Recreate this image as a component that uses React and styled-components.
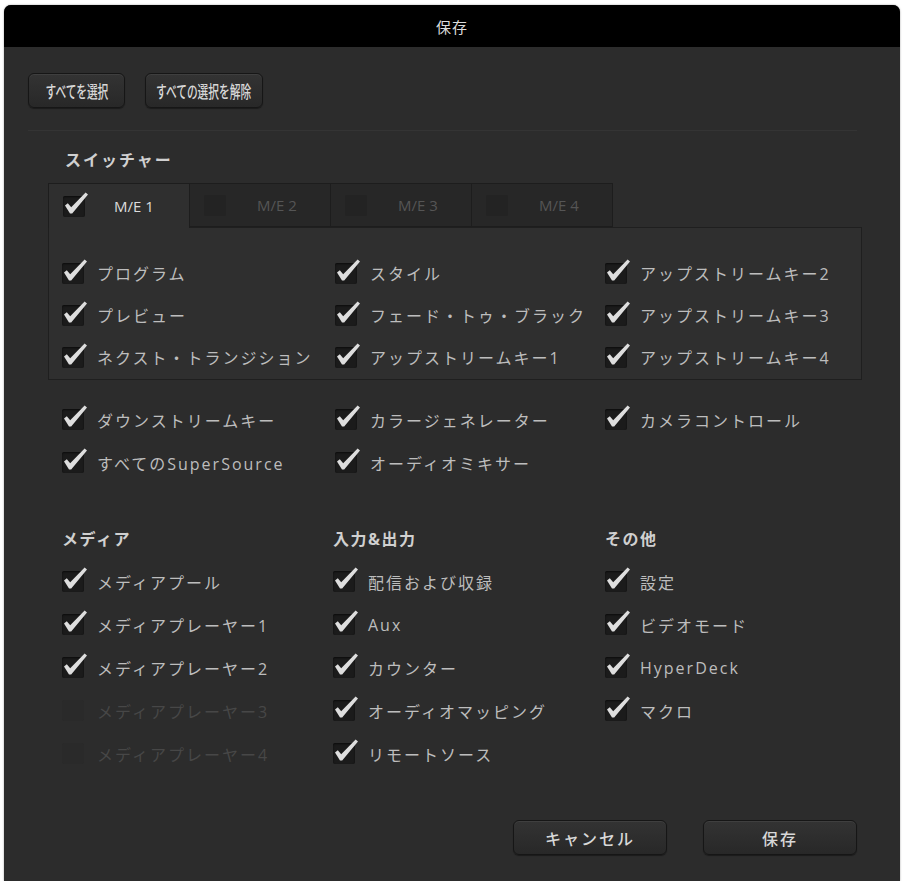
import React from "react";
import styled, { createGlobalStyle } from "styled-components";

const GlobalStyle = createGlobalStyle`
  html, body {
    margin: 0;
    padding: 0;
    background: #ffffff;
  }
  body {
    font-family: "Open Sans", "Noto Sans CJK JP", sans-serif;
  }
`;

const switcherRows = [
  ["プログラム", "スタイル", "アップストリームキー2"],
  ["プレビュー", "フェード・トゥ・ブラック", "アップストリームキー3"],
  ["ネクスト・トランジション", "アップストリームキー1", "アップストリームキー4"],
];

const switcherExtra = [
  "ダウンストリームキー",
  "カラージェネレーター",
  "カメラコントロール",
  "すべてのSuperSource",
  "オーディオミキサー",
];

const groups = [
  {
    title: "メディア",
    items: [
      { label: "メディアプール", on: true },
      { label: "メディアプレーヤー1", on: true },
      { label: "メディアプレーヤー2", on: true },
      { label: "メディアプレーヤー3", on: false },
      { label: "メディアプレーヤー4", on: false },
    ],
  },
  {
    title: "入力&出力",
    items: [
      { label: "配信および収録", on: true },
      { label: "Aux", on: true },
      { label: "カウンター", on: true },
      { label: "オーディオマッピング", on: true },
      { label: "リモートソース", on: true },
    ],
  },
  {
    title: "その他",
    items: [
      { label: "設定", on: true },
      { label: "ビデオモード", on: true },
      { label: "HyperDeck", on: true },
      { label: "マクロ", on: true },
    ],
  },
];

const tabs = ["M/E 1", "M/E 2", "M/E 3", "M/E 4"];

function Tick() {
  return (
    <TickSvg viewBox="0 0 27 27" width="27" height="27">
      <path
        d="M2 14.6 L4.8 12.2 L8.2 16.2 L22.6 1.6 L25 3.6 L9.2 22.4 L7 22.4 Z"
        fill="#dedede"
      />
    </TickSvg>
  );
}

function Check({ label, on = true, rowHeight = 42 }) {
  return (
    <CheckRow $h={rowHeight}>
      <Box $off={!on}>{on && <Tick />}</Box>
      <CheckLabel $off={!on}>{label}</CheckLabel>
    </CheckRow>
  );
}

export default function App() {
  return (
    <>
      <GlobalStyle />
      <Page>
        <Dialog>
          <TitleBar>保存</TitleBar>
          <Body>
            <TopActions>
              <ActionButton $w={97}>
                <Squeeze>すべてを選択</Squeeze>
              </ActionButton>
              <ActionButton $w={118}>
                <Squeeze>すべての選択を解除</Squeeze>
              </ActionButton>
            </TopActions>
            <Divider />

            <SectionTitle>スイッチャー</SectionTitle>
            <Switcher>
              <TabRow>
                {tabs.map((t, i) => (
                  <Tab key={t} $active={i === 0}>
                    <Box $off={i !== 0} $dim={i !== 0}>
                      {i === 0 && <Tick />}
                    </Box>
                    <TabLabel $active={i === 0}>{t}</TabLabel>
                  </Tab>
                ))}
              </TabRow>
              <Panel>
                {switcherRows.flat().map((label) => (
                  <Check key={label} label={label} />
                ))}
              </Panel>
              <ExtraGrid>
                {switcherExtra.map((label) => (
                  <Check key={label} label={label} rowHeight={43} />
                ))}
              </ExtraGrid>
            </Switcher>

            <Groups>
              {groups.map((g) => (
                <Group key={g.title}>
                  <GroupTitle>{g.title}</GroupTitle>
                  <GroupList>
                    {g.items.map((it) => (
                      <Check key={it.label} label={it.label} on={it.on} rowHeight={43} />
                    ))}
                  </GroupList>
                </Group>
              ))}
            </Groups>

            <Footer>
              <FooterButton>キャンセル</FooterButton>
              <FooterButton>保存</FooterButton>
            </Footer>
          </Body>
        </Dialog>
      </Page>
    </>
  );
}

const Page = styled.div`
  box-sizing: border-box;
  width: 903px;
  height: 881px;
  padding: 5px 3px 0 4px;
  overflow: hidden;
  background: #ffffff;
`;

const Dialog = styled.div`
  height: 876px;
  display: flex;
  flex-direction: column;
  background: #2c2c2c;
  border-radius: 7px 7px 0 0;
  overflow: hidden;
  box-shadow: 0 0 2px rgba(0, 0, 0, 0.4);
`;

const TitleBar = styled.div`
  height: 42px;
  flex: none;
  display: flex;
  align-items: center;
  justify-content: center;
  background: #000000;
  color: #dcdcdc;
  font-size: 15px;
  letter-spacing: 1px;
`;

const Body = styled.div`
  flex: 1;
  display: flex;
  flex-direction: column;
  padding: 26px 38px 0 24px;
`;

const TopActions = styled.div`
  display: flex;
  gap: 20px;
`;

const ActionButton = styled.button`
  width: ${(p) => p.$w}px;
  height: 35px;
  padding: 0;
  display: flex;
  align-items: center;
  justify-content: center;
  background: linear-gradient(#333333, #282828);
  border: 1px solid #161616;
  border-radius: 6px;
  box-shadow: inset 0 1px 0 rgba(255, 255, 255, 0.06), 0 1px 1px rgba(0, 0, 0, 0.4);
  color: #d8d8d8;
  font-family: "Noto Sans CJK JP", sans-serif;
  font-size: 17px;
  font-weight: 500;
  white-space: nowrap;
`;

const Squeeze = styled.span`
  display: inline-block;
  transform: scaleX(0.63);
`;

const Divider = styled.div`
  height: 1px;
  margin: 22px 5px 0 0;
  background: #343434;
`;

const SectionTitle = styled.div`
  margin: 19px 0 0 37px;
  line-height: 20px;
  font-size: 16px;
  font-weight: 700;
  letter-spacing: 2px;
  color: #d0d0d0;
`;

const Switcher = styled.div`
  margin: 13px 0 0 20px;
  display: flex;
  flex-direction: column;
`;

const TabRow = styled.div`
  display: flex;
  height: 44px;
`;

const Tab = styled.div`
  box-sizing: border-box;
  width: 142px;
  height: ${(p) => (p.$active ? "45px" : "44px")};
  display: flex;
  align-items: center;
  padding-left: 14px;
  position: relative;
  z-index: ${(p) => (p.$active ? 1 : 0)};
  background: ${(p) => (p.$active ? "#2f2f2f" : "#272727")};
  border: 1px solid #1d1d1d;
  border-bottom: ${(p) => (p.$active ? "none" : "1px solid #1d1d1d")};
  margin-right: -1px;
`;

const TabLabel = styled.span`
  margin-left: ${(p) => (p.$active ? "29px" : "31px")};
  font-size: 15px;
  font-weight: 500;
  color: ${(p) => (p.$active ? "#dcdcdc" : "#555555")};
`;

const Panel = styled.div`
  display: grid;
  grid-template-columns: 273px 270px 1fr;
  padding: 24px 13px 1px;
  background: #2f2f2f;
  border: 1px solid #1f1f1f;
`;

const ExtraGrid = styled.div`
  display: grid;
  grid-template-columns: 273px 270px 1fr;
  margin-top: 18px;
  padding-left: 14px;
`;

const CheckRow = styled.div`
  height: ${(p) => p.$h}px;
  display: flex;
  align-items: center;
`;

const Box = styled.div`
  position: relative;
  flex: none;
  width: 22px;
  height: 21px;
  border-radius: 2px;
  background: ${(p) => (p.$dim ? "#232323" : p.$off ? "#2a2a2a" : "#1b1b1b")};
  box-shadow: ${(p) => (p.$off ? "none" : "inset 0 1px 2px rgba(0,0,0,0.6)")};
`;

const TickSvg = styled.svg`
  position: absolute;
  left: 0;
  top: -5px;
  overflow: visible;
`;

const CheckLabel = styled.span`
  margin-left: 13px;
  font-size: 16px;
  letter-spacing: 2px;
  white-space: nowrap;
  color: ${(p) => (p.$off ? "#474747" : "#bdbdbd")};
`;

const Groups = styled.div`
  display: grid;
  grid-template-columns: 271px 272px 1fr;
  margin: 45px 0 0 34px;
`;

const Group = styled.div`
  display: flex;
  flex-direction: column;
`;

const GroupTitle = styled.div`
  line-height: 20px;
  font-size: 16px;
  font-weight: 700;
  letter-spacing: 1.5px;
  color: #d0d0d0;
`;

const GroupList = styled.div`
  margin-top: 11px;
  display: flex;
  flex-direction: column;
`;

const Footer = styled.div`
  margin-top: auto;
  margin-right: 5px;
  padding-bottom: 26px;
  display: flex;
  justify-content: flex-end;
  gap: 36px;
`;

const FooterButton = styled.button`
  width: 154px;
  height: 35px;
  background: linear-gradient(#333333, #282828);
  border: 1px solid #161616;
  border-radius: 6px;
  box-shadow: inset 0 1px 0 rgba(255, 255, 255, 0.06), 0 1px 1px rgba(0, 0, 0, 0.4);
  color: #d8d8d8;
  font-family: "Noto Sans CJK JP", sans-serif;
  font-size: 16px;
  font-weight: 500;
  letter-spacing: 2px;
`;
